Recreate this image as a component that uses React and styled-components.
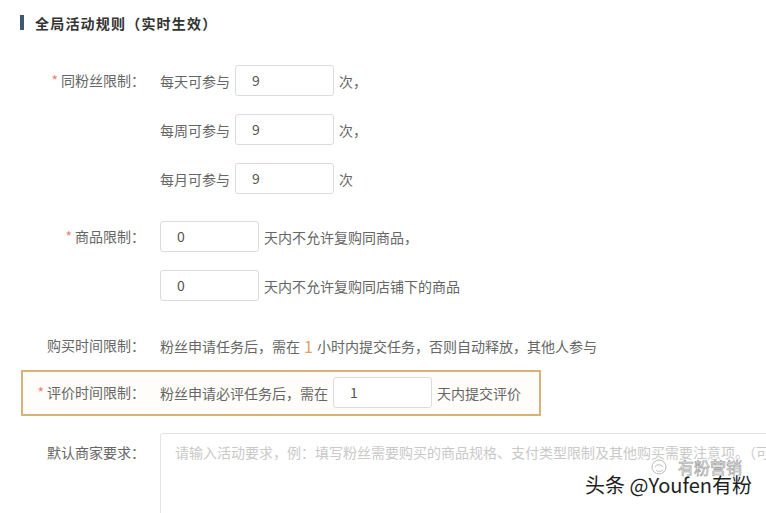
import React from "react";
import styled, { createGlobalStyle } from "styled-components";

const GlobalStyle = createGlobalStyle`
  html, body {
    margin: 0;
    padding: 0;
    overflow: hidden;
    background: #ffffff;
  }
  body {
    font-family: "Noto Sans CJK SC", "Liberation Sans", sans-serif;
    font-size: 14px;
    color: #666;
  }
`;

const Page = styled.div`
  position: relative;
  width: 766px;
  height: 513px;
  overflow: hidden;
  padding: 14px 0 0 20px;
  box-sizing: border-box;
`;

const Title = styled.h2`
  display: flex;
  align-items: center;
  margin: 0;
  height: 17px;
  font-size: 14px;
  font-weight: bold;
  letter-spacing: 1.2px;
  color: #333;
  &::before {
    content: "";
    width: 4px;
    height: 15px;
    margin-right: 11px;
    background: #3e5a72;
  }
`;

const Form = styled.div`
  display: flex;
  flex-direction: column;
  padding-left: 1px;
`;

const Field = styled.div`
  display: grid;
  grid-template-columns: 122px 1fr;
  column-gap: 15px;
  margin-top: ${(p) => p.$top}px;
  border: 2px solid ${(p) => (p.$highlight ? "#d8b276" : "transparent")};
  background: ${(p) => (p.$highlight ? "#fffdf9" : "transparent")};
  padding: ${(p) => (p.$highlight ? "5px 0 6px" : "0")};
  width: ${(p) => (p.$highlight ? "520px" : "auto")};
  box-sizing: border-box;
`;

const Label = styled.div`
  height: 31px;
  line-height: 31px;
  text-align: right;
  white-space: nowrap;
  color: #666;
  padding-top: ${(p) => p.$pad || 0}px;
`;

const Star = styled.span`
  color: #e8827a;
  margin-right: 3px;
`;

const Lines = styled.div`
  display: flex;
  flex-direction: column;
  gap: 18px;
`;

const Line = styled.div`
  display: flex;
  align-items: center;
  height: 31px;
  white-space: nowrap;
  color: #666;
`;

const Input = styled.div`
  width: 99px;
  height: 31px;
  box-sizing: border-box;
  border: 1px solid #dcdcdc;
  border-radius: 3px;
  background: #fff;
  padding-left: 16px;
  line-height: 29px;
  color: #555;
  margin: 0 ${(p) => (p.$after ? 5 : 0)}px 0 ${(p) => (p.$before ? 5 : 0)}px;
`;

const Hot = styled.span`
  color: #dca26a;
  font-size: 16px;
  margin: 0 4px;
`;

const TextArea = styled.div`
  width: 640px;
  height: 120px;
  border: 1px solid #e3e3e3;
  border-radius: 3px;
  box-sizing: border-box;
  padding: 8px 14px;
  color: #c9c9c9;
  white-space: nowrap;
  overflow: hidden;
`;

const Watermark = styled.div`
  position: absolute;
  right: 14px;
  bottom: 14px;
  font-size: 20px;
  color: #1e1e1e;
  text-shadow: 0 0 2px #fff, 0 0 2px #fff, 0 0 3px #fff;
`;

const Brand = styled.div`
  position: absolute;
  right: 24px;
  bottom: 34px;
  display: flex;
  align-items: center;
  gap: 8px;
  font-size: 16px;
  color: #fff;
  -webkit-text-stroke: 0.6px #999;
`;

function Logo() {
  return (
    <svg width="22" height="20" viewBox="0 0 22 20" fill="none" stroke="#bbb" strokeWidth="1">
      <circle cx="11" cy="10" r="7" />
      <path d="M7 10c1-3 6-3 8 0M8 13c2 2 5 2 7 0" />
    </svg>
  );
}

export default function App() {
  return (
    <Page>
      <GlobalStyle />
      <Title>全局活动规则（实时生效）</Title>
      <Form>
        <Field $top={32}>
          <Label>
            <Star>*</Star>同粉丝限制：
          </Label>
          <Lines>
            <Line>
              每天可参与<Input $before $after>9</Input>次，
            </Line>
            <Line>
              每周可参与<Input $before $after>9</Input>次，
            </Line>
            <Line>
              每月可参与<Input $before $after>9</Input>次
            </Line>
          </Lines>
        </Field>

        <Field $top={23}>
          <Label>
            <Star>*</Star>商品限制：
          </Label>
          <Lines>
            <Line>
              <Input $after>0</Input>天内不允许复购同商品，
            </Line>
            <Line>
              <Input $after>0</Input>天内不允许复购同店铺下的商品
            </Line>
          </Lines>
        </Field>

        <Field $top={25}>
          <Label>购买时间限制：</Label>
          <Line>
            粉丝申请任务后，需在<Hot>1</Hot>小时内提交任务，否则自动释放，其他人参与
          </Line>
        </Field>

        <Field $top={7} $highlight>
          <Label>
            <Star>*</Star>评价时间限制：
          </Label>
          <Line>
            粉丝申请必评任务后，需在<Input $before $after>1</Input>天内提交评价
          </Line>
        </Field>

        <Field $top={15}>
          <Label $pad={4}>默认商家要求：</Label>
          <TextArea>
            请输入活动要求，例：填写粉丝需要购买的商品规格、支付类型限制及其他购买需要注意项。（可选）
          </TextArea>
        </Field>
      </Form>
      <Brand>
        <Logo />
        有粉营销
      </Brand>
      <Watermark>头条 @Youfen有粉</Watermark>
    </Page>
  );
}
